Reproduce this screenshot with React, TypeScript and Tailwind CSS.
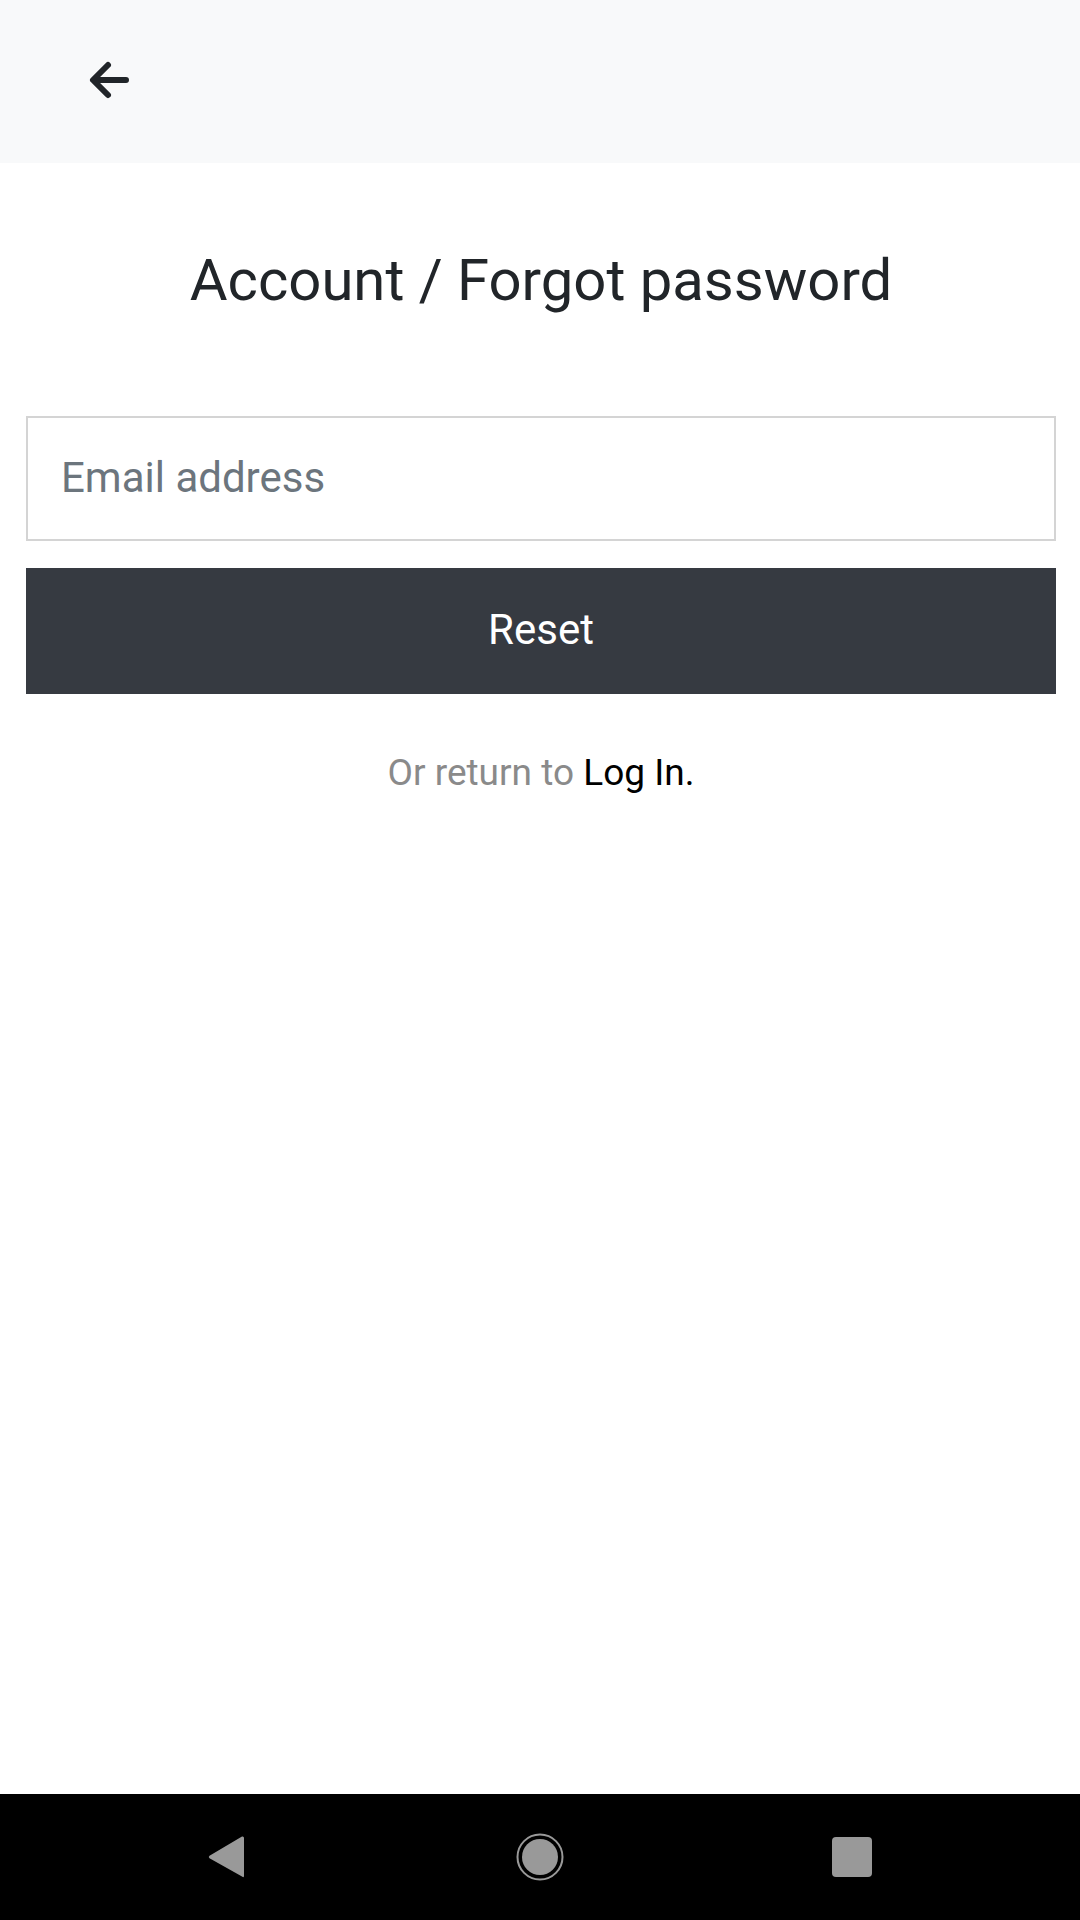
import React from 'react';

function BackArrow() {
  return (
    <svg width="44" height="40" viewBox="0 0 44 40" fill="none" className="block">
      <path
        d="M40 20H8M22 5L7 20l15 15"
        stroke="#212529"
        strokeWidth="6"
        strokeLinecap="round"
        strokeLinejoin="round"
      />
    </svg>
  );
}

function NavBar() {
  return (
    <div className="h-[126px] w-full bg-black flex items-center justify-center">
      <div className="w-[664px] flex items-center justify-between">
        <svg width="40" height="44" viewBox="0 0 40 44" className="block">
          <path
            d="M34 1.5 Q36 1 36 3 L36 41 Q36 43 34 41.5 L1.5 23.2 Q0 22 1.5 20.8 Z"
            fill="#999999"
          />
        </svg>
        <svg width="48" height="48" viewBox="0 0 48 48" className="block">
          <circle cx="24" cy="24" r="22.5" fill="none" stroke="#999999" strokeWidth="2" />
          <circle cx="24" cy="24" r="18" fill="#999999" />
        </svg>
        <div className="w-[40px] h-[40px] rounded-[4px] bg-[#999999]" />
      </div>
    </div>
  );
}

export default function App() {
  return (
    <div
      className="w-[1080px] h-[1920px] flex flex-col bg-white"
      style={{ fontFamily: 'Roboto, "Noto Sans", sans-serif' }}
    >
      <header className="h-[163px] w-full bg-[#f8f9fa] flex items-start pt-[60px] pl-[86px]">
        <button className="flex items-center">
          <BackArrow />
        </button>
      </header>

      <main className="flex-1 flex flex-col pl-[26px] pr-[24px]">
        <h1 className="mt-[82px] text-center text-[58px] leading-[70px] text-[#212529] font-normal">
          Account / Forgot password
        </h1>

        <input
          type="email"
          placeholder="Email address"
          className="mt-[101px] w-full h-[125px] border-2 border-[#d4d4d4] bg-white px-[33px] pb-[2px] text-[42px] text-[#212529] placeholder:text-[#6c757d] outline-none"
        />

        <button className="mt-[27px] w-full h-[126px] pb-[4px] bg-[#363a41] text-white text-[42px]">
          Reset
        </button>

        <p className="mt-[57px] text-center text-[37px] leading-[44px] text-[#8a8a8a]">
          Or return to <span className="text-black">Log In.</span>
        </p>
      </main>

      <NavBar />
    </div>
  );
}
